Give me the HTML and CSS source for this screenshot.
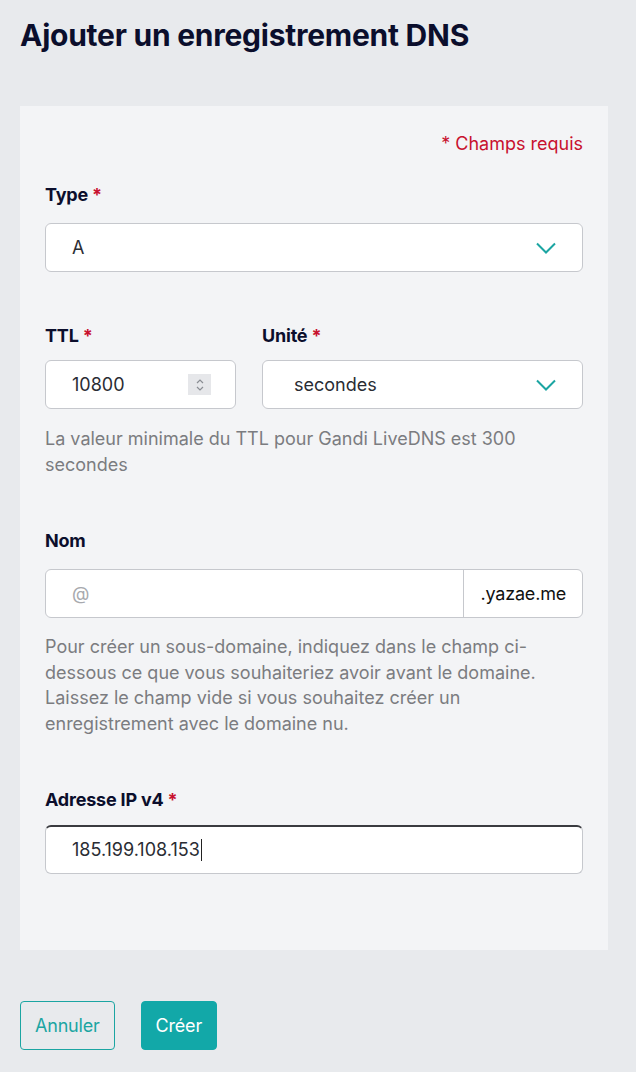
FILE: index.html
```html
<!DOCTYPE html>
<html lang="fr">
<head>
<meta charset="utf-8">
<title>Ajouter un enregistrement DNS</title>
<link rel="stylesheet" href="styles.css">
</head>
<body>
<div class="page">
  <h1 class="title">Ajouter un enregistrement DNS</h1>
  <form class="card">
    <div class="required-note">* Champs requis</div>

    <div class="field field-type">
      <div class="label">Type <span class="star">*</span></div>
      <div class="control select">
        <span class="value">A</span>
        <svg class="chev" width="20" height="12" viewBox="0 0 20 12"><path d="M1 1.5 L10 10.5 L19 1.5" fill="none" stroke="#1ba5a2" stroke-width="2"/></svg>
      </div>
    </div>

    <div class="row field-ttl">
      <div class="field col-ttl">
        <div class="label">TTL <span class="star">*</span></div>
        <div class="control number">
          <span class="value">10800</span>
          <span class="spin">
            <svg width="10" height="16" viewBox="0 0 10 16"><path d="M2 6 L5 3 L8 6 M2 10 L5 13 L8 10" fill="none" stroke="#8a8d93" stroke-width="1.2"/></svg>
          </span>
        </div>
      </div>
      <div class="field col-unit">
        <div class="label">Unité <span class="star">*</span></div>
        <div class="control select unit">
          <span class="value">secondes</span>
          <svg class="chev" width="20" height="12" viewBox="0 0 20 12"><path d="M1 1.5 L10 10.5 L19 1.5" fill="none" stroke="#1ba5a2" stroke-width="2"/></svg>
        </div>
      </div>
    </div>
    <p class="help help-ttl">La valeur minimale du TTL pour Gandi LiveDNS est 300 secondes</p>

    <div class="field field-nom">
      <div class="label">Nom</div>
      <div class="control group">
        <span class="value placeholder">@</span>
        <span class="addon">.yazae.me</span>
      </div>
    </div>
    <p class="help help-nom">Pour créer un sous-domaine, indiquez dans le champ ci-dessous ce que vous souhaiteriez avoir avant le domaine. Laissez le champ vide si vous souhaitez créer un enregistrement avec le domaine nu.</p>

    <div class="field field-ip">
      <div class="label">Adresse IP v4 <span class="star">*</span></div>
      <div class="control focused">
        <span class="value">185.199.108.153</span><span class="caret"></span>
      </div>
    </div>
  </form>

  <div class="actions">
    <button class="btn btn-outline" type="button">Annuler</button>
    <button class="btn btn-primary" type="button">Créer</button>
  </div>
</div>
</body>
</html>
```

FILE: styles.css
```css
* { box-sizing: border-box; }
html, body { margin: 0; padding: 0; }
body {
  background: #e8eaed;
  font-family: Inter, "Noto Sans", sans-serif;
  color: #0d1030;
}
.page {
  padding: 15px 20px 20px 20px;
}
.title {
  margin: 0;
  font-size: 30px;
  font-weight: 700;
  line-height: 40px;
  letter-spacing: -0.25px;
  color: #0b0e2c;
}
.card {
  margin-top: 51px;
  width: 588px;
  background: #f3f4f6;
  padding: 26px 25px 76px 25px;
}
.required-note {
  text-align: right;
  color: #c8102e;
  font-size: 18px;
  line-height: 24px;
}
.label {
  font-size: 18px;
  font-weight: 700;
  line-height: 24px;
  letter-spacing: -0.2px;
  color: #0b0e2c;
  margin-bottom: 16px;
}
.star { color: #c8102e; }
.field-type { margin-top: 27px; }
.control {
  height: 49px;
  background: #fff;
  border: 1px solid #c6c8cd;
  border-radius: 6px;
  display: flex;
  align-items: center;
  padding: 0 26px;
  font-size: 18px;
  color: #2a2c33;
}
.select { justify-content: space-between; }
.row {
  display: flex;
  gap: 26px;
  margin-top: 52px;
}
.row .label { margin-bottom: 12px; }
.col-ttl { width: 191px; }
.col-unit { flex: 1; }
.number { justify-content: space-between; padding-right: 24px; }
.spin {
  width: 23px;
  height: 21px;
  background: #e6e7ea;
  display: flex;
  align-items: center;
  justify-content: center;
}
.unit { padding-left: 31px; }
.help {
  margin: 17px 0 0 0;
  font-size: 18px;
  line-height: 26px;
  color: #7b7c80;
}
.help-nom { margin-top: 16px; line-height: 25.7px; }
.field-nom { margin-top: 51px; }
.group { padding: 0; }
.group .value {
  flex: 1;
  padding-left: 26px;
}
.placeholder { color: #a7a9ae; }
.addon {
  height: 100%;
  border-left: 1px solid #c6c8cd;
  display: flex;
  align-items: center;
  padding: 0 16px;
  letter-spacing: -0.2px;
  color: #111;
}
.field-ip { margin-top: 51px; }
.field-ip .label { margin-bottom: 13px; }
.focused {
  border-top: 2px solid #3a3b40;
}
.caret {
  display: inline-block;
  width: 1px;
  height: 22px;
  background: #222;
  margin-left: 1px;
}
.actions {
  display: flex;
  gap: 26px;
  margin-top: 51px;
}
.btn {
  height: 49px;
  border-radius: 4px;
  font-family: Inter, "Noto Sans", sans-serif;
  font-size: 18px;
  letter-spacing: -0.2px;
  padding: 0 14px;
  cursor: pointer;
}
.btn-outline {
  background: transparent;
  border: 1px solid #1ba5a2;
  color: #1ba5a2;
}
.btn-primary {
  background: #12a8a8;
  border: 1px solid #12a8a8;
  color: #fff;
}
```
